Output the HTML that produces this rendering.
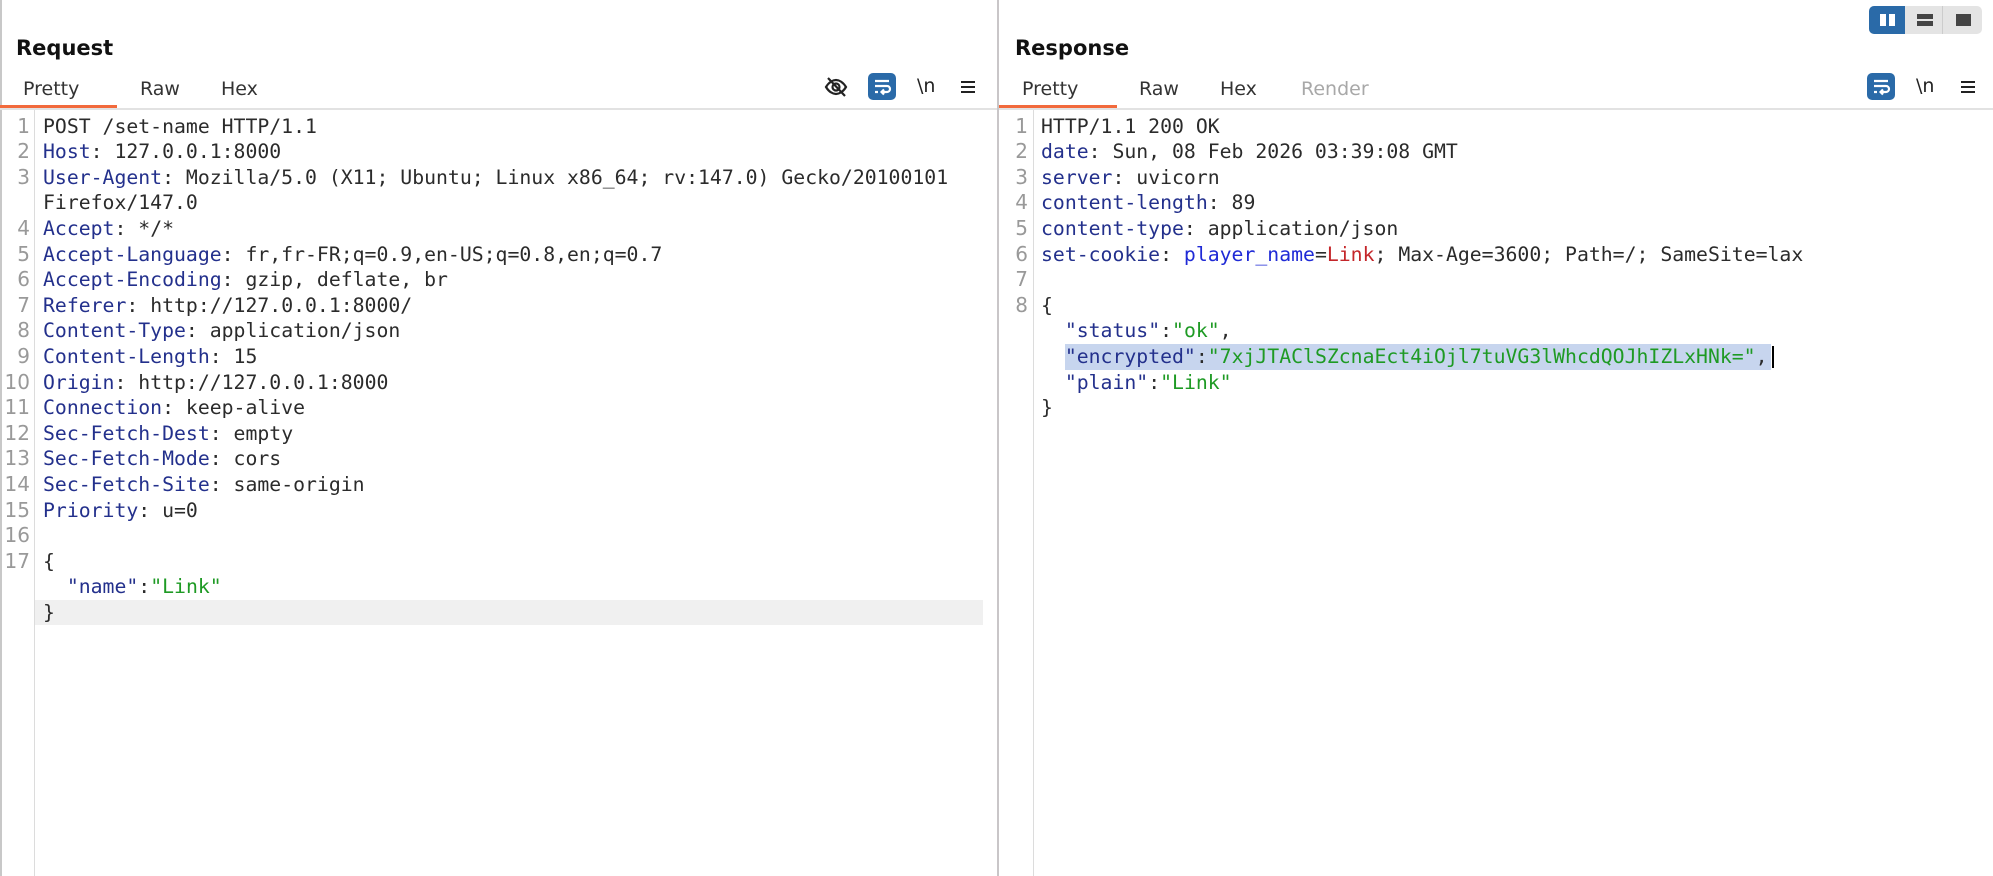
<!DOCTYPE html>
<html><head><meta charset="utf-8"><style>
*{margin:0;padding:0;box-sizing:border-box}
body{width:1993px;height:876px;background:#fff;position:relative;overflow:hidden;font-family:"DejaVu Sans","Liberation Sans",sans-serif;color:#222}
.abs{position:absolute}
h2{position:absolute;font-size:21px;font-weight:bold;top:36px;color:#111}
.tab{position:absolute;top:78px;font-size:19px;color:#333}
.ul{position:absolute;top:105px;height:3px;background:#f26a3c}
.sep{position:absolute;top:108px;height:2px;background:#e2e2e2}
.code{position:absolute;top:113.6px;font-family:"DejaVu Sans Mono","Liberation Mono",monospace;font-size:19.8px;line-height:25.6px;white-space:pre;color:#2b2b2b}
.nums{position:absolute;top:113.6px;font-family:"DejaVu Sans",sans-serif;font-size:20px;line-height:25.6px;color:#999;text-align:right;width:28px;white-space:pre}
.k{color:#23308c}.s{color:#1e9a24}.b{color:#1f2ad6}.r{color:#c4262a}
.gut{position:absolute;top:110px;bottom:0;width:1px;background:#dcdcdc}
.btn{position:absolute;top:73px;width:28px;height:27px;background:#2a6aa8;border-radius:5px}
</style></head><body>
<div class="abs" style="left:0;top:0;width:2px;height:876px;background:#c8c8c8"></div>
<div class="abs" style="left:997px;top:0;width:2px;height:876px;background:#c9c6c8"></div>

<h2 style="left:16px">Request</h2>
<div class="tab" style="left:23px">Pretty</div>
<div class="tab" style="left:140px">Raw</div>
<div class="tab" style="left:221px">Hex</div>
<div class="ul" style="left:0;width:117px"></div>
<div class="sep" style="left:0;width:997px"></div>

<svg class="abs" style="left:824px;top:75px" width="24" height="24" viewBox="0 0 24 24" fill="none" stroke="#222" stroke-width="2.2"><path d="M2 12c3-5 7-7 10-7s7 2 10 7c-3 5-7 7-10 7S5 17 2 12z"/><circle cx="12" cy="12" r="3.5"/><path d="M4 3l17 18"/></svg>
<div class="btn" style="left:868px"><svg width="28" height="27" viewBox="0 0 28 27" fill="none" stroke="#fff" stroke-width="2.2"><path d="M7 8h14M7 13h12a3 3 0 010 6h-5M16 16.5l-2.5 2.5 2.5 2.5M7 19h3"/></svg></div>
<div class="abs" style="left:917px;top:75px;font-size:19px;color:#222">\n</div>
<svg class="abs" style="left:960px;top:79px" width="16" height="16" viewBox="0 0 16 16" stroke="#222" stroke-width="2"><path d="M1 3h14M1 8h14M1 13h14"/></svg>

<h2 style="left:1015px">Response</h2>
<div class="tab" style="left:1022px">Pretty</div>
<div class="tab" style="left:1139px">Raw</div>
<div class="tab" style="left:1220px">Hex</div>
<div class="tab" style="left:1301px;color:#a8a8a8">Render</div>
<div class="ul" style="left:999px;width:118px"></div>
<div class="sep" style="left:999px;width:994px"></div>

<div class="btn" style="left:1867px"><svg width="28" height="27" viewBox="0 0 28 27" fill="none" stroke="#fff" stroke-width="2.2"><path d="M7 8h14M7 13h12a3 3 0 010 6h-5M16 16.5l-2.5 2.5 2.5 2.5M7 19h3"/></svg></div>
<div class="abs" style="left:1916px;top:75px;font-size:19px;color:#222">\n</div>
<svg class="abs" style="left:1960px;top:79px" width="16" height="16" viewBox="0 0 16 16" stroke="#222" stroke-width="2"><path d="M1 3h14M1 8h14M1 13h14"/></svg>

<div class="abs" style="left:1869px;top:6px;width:113px;height:28px;background:#e4e4e4;border-radius:5px;overflow:hidden">
<div class="abs" style="left:0;top:0;width:36px;height:28px;background:#2a6aa8"></div>
<div class="abs" style="left:11px;top:8px;width:6px;height:12px;background:#fff"></div>
<div class="abs" style="left:20px;top:8px;width:6px;height:12px;background:#fff"></div>
<div class="abs" style="left:48px;top:8px;width:16px;height:5px;background:#444"></div>
<div class="abs" style="left:48px;top:15px;width:16px;height:5px;background:#444"></div>
<div class="abs" style="left:73px;top:0;width:1px;height:28px;background:#ccc"></div>
<div class="abs" style="left:87px;top:8px;width:15px;height:12px;background:#444"></div>
</div>

<div class="gut" style="left:34px"></div>
<div class="abs" style="left:35px;top:600px;width:948px;height:25px;background:#f0f0f0"></div>
<div class="nums" style="left:2px">1
2
3

4
5
6
7
8
9
10
11
12
13
14
15
16
17</div>
<div class="code" style="left:43px">POST /set-name HTTP/1.1
<span class="k">Host</span>: 127.0.0.1:8000
<span class="k">User-Agent</span>: Mozilla/5.0 (X11; Ubuntu; Linux x86_64; rv:147.0) Gecko/20100101
Firefox/147.0
<span class="k">Accept</span>: */*
<span class="k">Accept-Language</span>: fr,fr-FR;q=0.9,en-US;q=0.8,en;q=0.7
<span class="k">Accept-Encoding</span>: gzip, deflate, br
<span class="k">Referer</span>: http://127.0.0.1:8000/
<span class="k">Content-Type</span>: application/json
<span class="k">Content-Length</span>: 15
<span class="k">Origin</span>: http://127.0.0.1:8000
<span class="k">Connection</span>: keep-alive
<span class="k">Sec-Fetch-Dest</span>: empty
<span class="k">Sec-Fetch-Mode</span>: cors
<span class="k">Sec-Fetch-Site</span>: same-origin
<span class="k">Priority</span>: u=0

{
  <span class="k">"name"</span>:<span class="s">"Link"</span>
}</div>

<div class="gut" style="left:1033px"></div>
<div class="abs" style="left:1065px;top:344px;width:706px;height:26px;background:#c7d5ee"></div>
<div class="abs" style="left:1772px;top:346px;width:2px;height:22px;background:#000"></div>
<div class="nums" style="left:1000px">1
2
3
4
5
6
7
8</div>
<div class="code" style="left:1041px">HTTP/1.1 200 OK
<span class="k">date</span>: Sun, 08 Feb 2026 03:39:08 GMT
<span class="k">server</span>: uvicorn
<span class="k">content-length</span>: 89
<span class="k">content-type</span>: application/json
<span class="k">set-cookie</span>: <span class="b">player_name</span>=<span class="r">Link</span>; Max-Age=3600; Path=/; SameSite=lax

{
  <span class="k">"status"</span>:<span class="s">"ok"</span>,
  <span class="k">"encrypted"</span>:<span class="s">"7xjJTAClSZcnaEct4iOjl7tuVG3lWhcdQOJhIZLxHNk="</span>,
  <span class="k">"plain"</span>:<span class="s">"Link"</span>
}</div>
</body></html>
